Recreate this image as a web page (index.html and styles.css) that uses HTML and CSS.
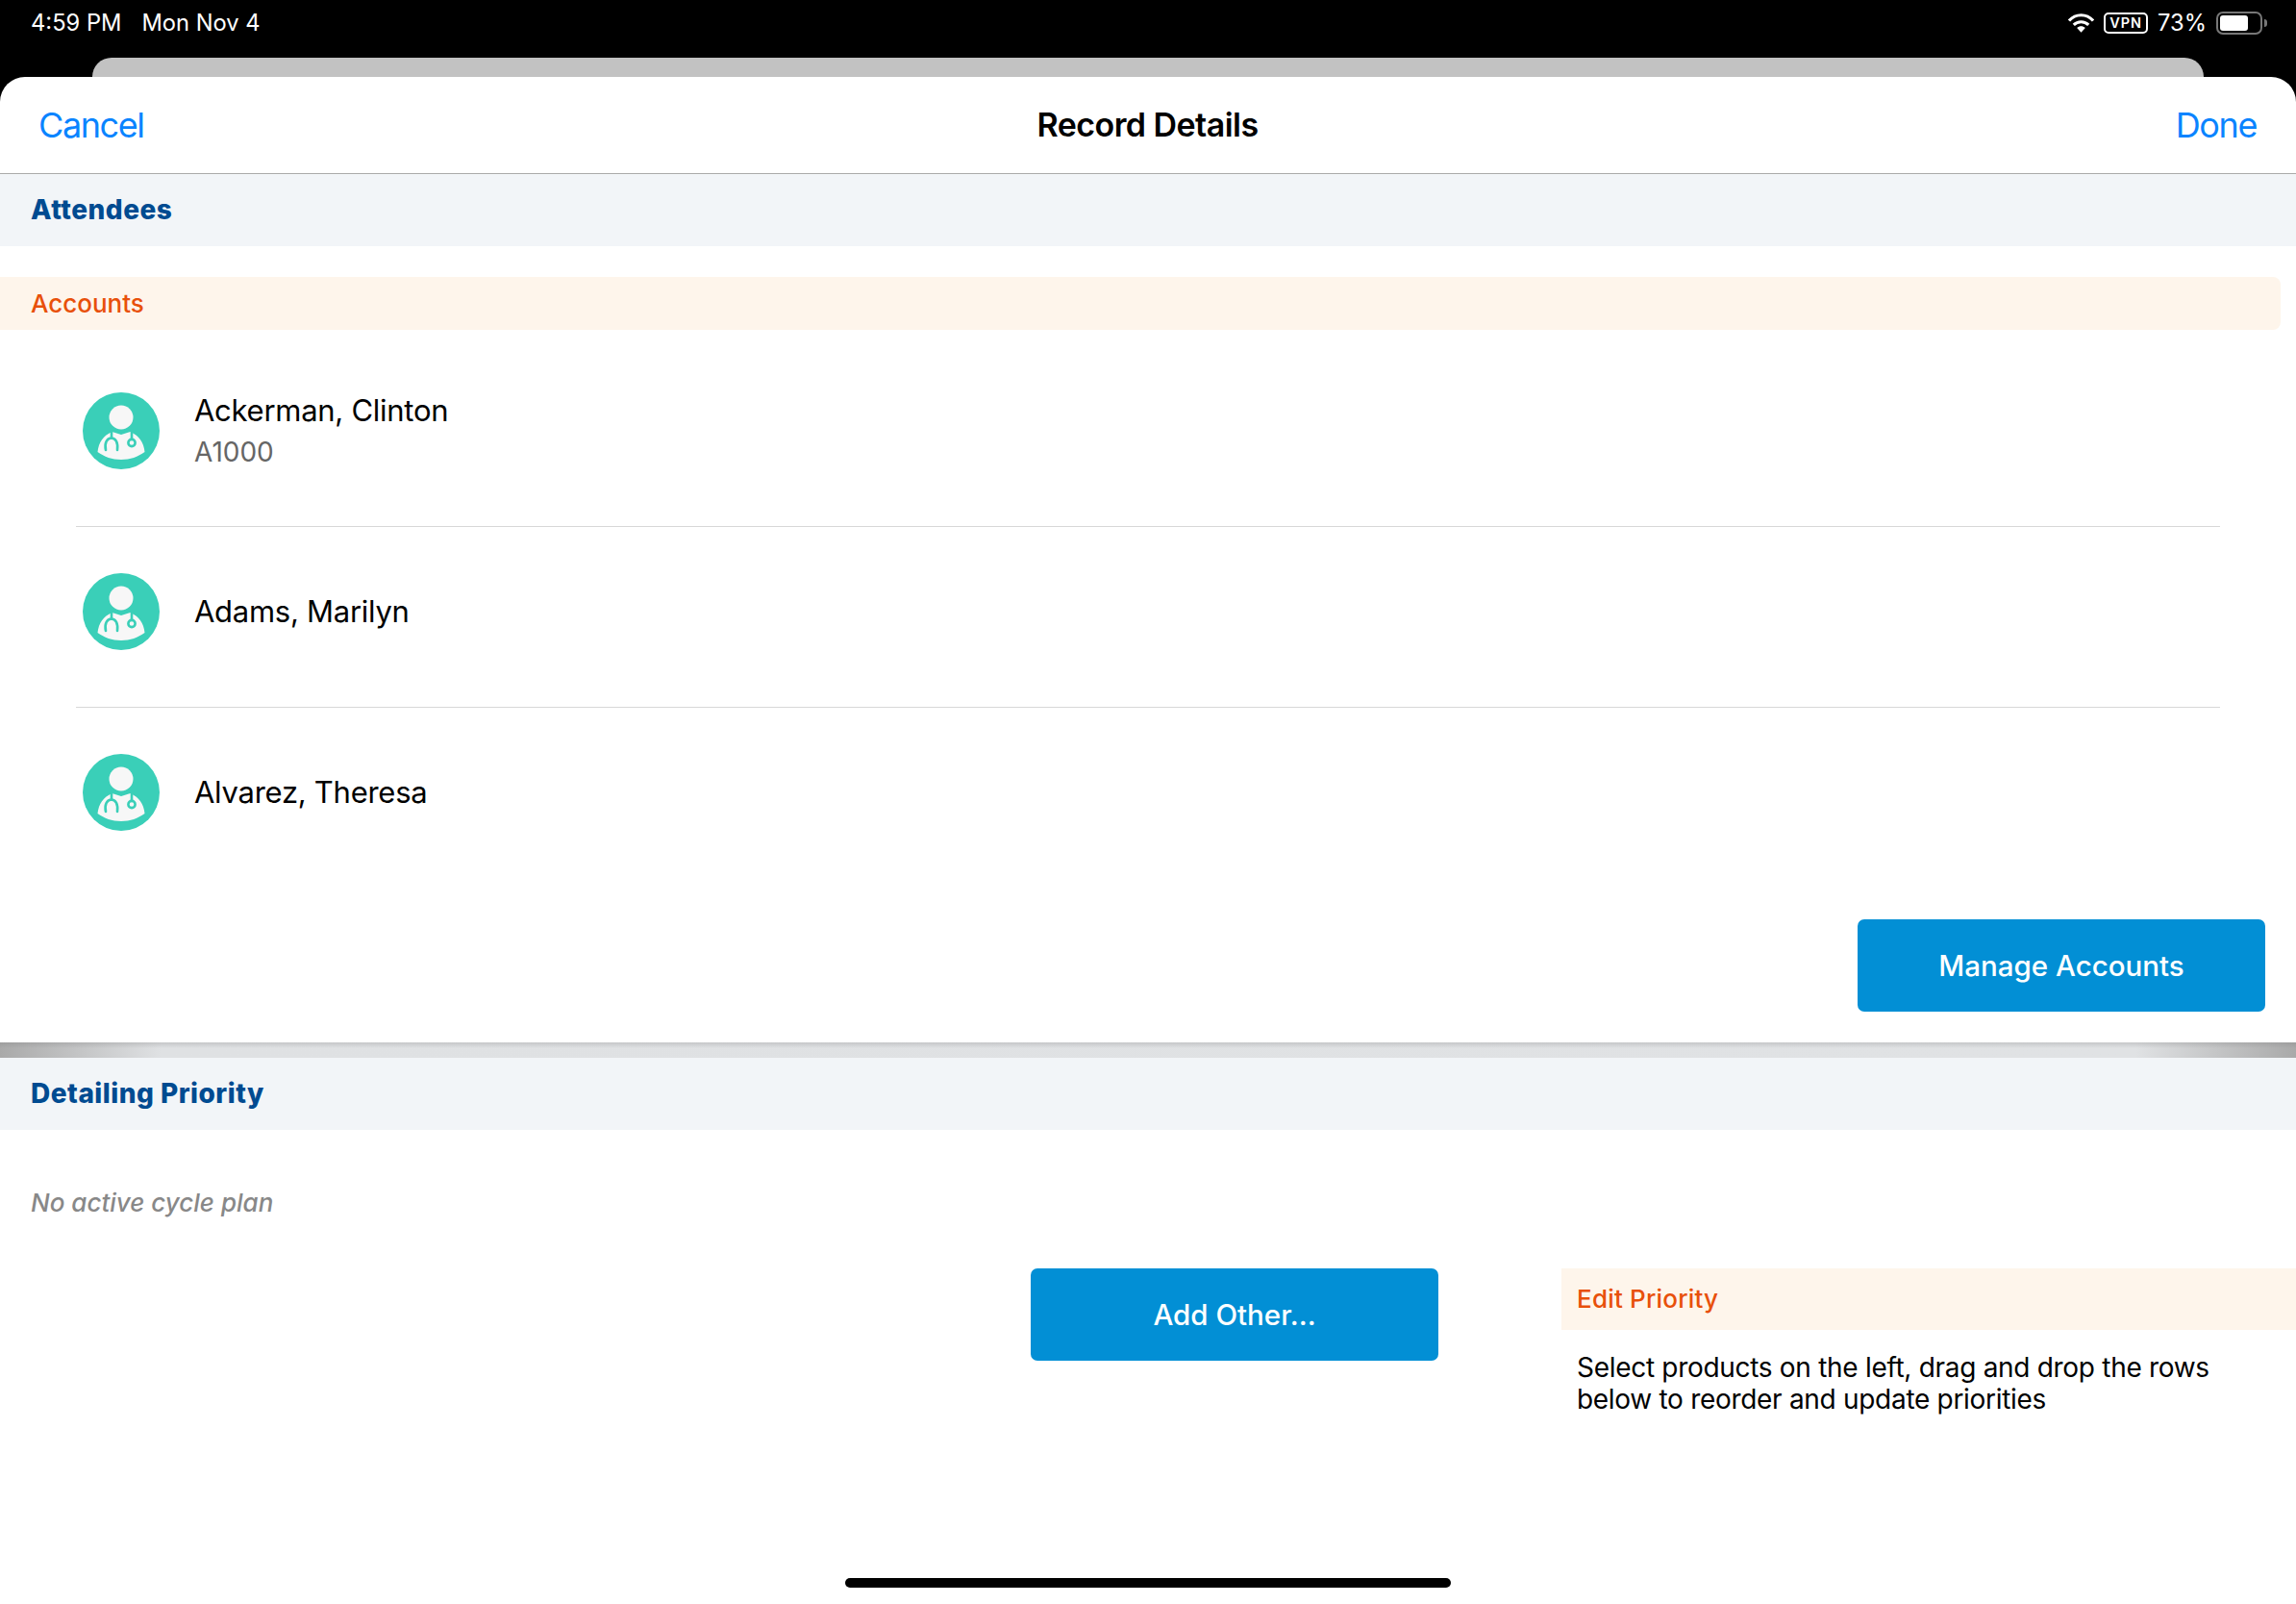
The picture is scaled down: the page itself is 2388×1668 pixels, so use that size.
FILE: index.html
```html
<!DOCTYPE html>
<html lang="en">
<head>
<meta charset="utf-8">
<title>Record Details</title>
<link rel="stylesheet" href="styles.css">
</head>
<body>
<div class="screen">
  <svg width="0" height="0" class="defs">
    <symbol id="doctor" viewBox="0 0 80 80">
      <circle cx="40" cy="40" r="40" fill="#3acfb8"/>
      <circle cx="40" cy="26" r="12.500" fill="#f7f7f7"/>
      <path d="M15.500 62c1-10 6-17 15-21l9.500 3 9.500-3c9 4 14 11 15 21-7 5-15 8-24.500 8s-17.500-3-24.500-8z" fill="#f7f7f7"/>
      <path d="M30 41v7" fill="none" stroke="#3acfb8" stroke-width="2.600"/>
      <path d="M24 60c-1.500-7 1-12 5.500-12.500 5 0 7.500 5 6.500 12.500" fill="none" stroke="#3acfb8" stroke-width="2.600" stroke-linecap="round"/>
      <path d="M51 41v8" fill="none" stroke="#3acfb8" stroke-width="2.600"/>
      <circle cx="51" cy="52.500" r="3.600" fill="none" stroke="#3acfb8" stroke-width="2.600"/>
    </symbol>
  </svg>
  <header class="status">
    <div class="status-left"><span>4:59 PM</span><span>Mon Nov 4</span></div>
    <div class="status-right">
      <svg class="wifi" width="27" height="20" viewBox="0 0 28 20"><path d="M1 7.500C8-.5 20-.5 27 7.500" fill="none" stroke="#fff" stroke-width="3.200"/><path d="M6 12c4.500-4.500 11.500-4.500 16 0" fill="none" stroke="#fff" stroke-width="3.200"/><path d="M9.500 15.200c2.800-2.600 6.200-2.600 9 0L14 20z" fill="#fff"/></svg>
      <span class="vpn">VPN</span>
      <span class="pct">73%</span>
      <span class="battery"><span class="battery-fill"></span></span><span class="battery-cap"></span>
    </div>
  </header>
  <div class="back-sheet"></div>
  <main class="sheet">
    <nav class="nav">
      <a class="nav-link">Cancel</a>
      <h1 class="nav-title">Record Details</h1>
      <a class="nav-link nav-link-end">Done</a>
    </nav>
    <section class="attendees">
      <h2 class="section-head">Attendees</h2>
      <h3 class="sub-head">Accounts</h3>
      <ul class="list">
        <li class="row">
          <svg class="avatar"><use href="#doctor"/></svg>
          <div class="row-text"><div class="name">Ackerman, Clinton</div><div class="code">A1000</div></div>
        </li>
        <li class="row">
          <svg class="avatar"><use href="#doctor"/></svg>
          <div class="row-text"><div class="name">Adams, Marilyn</div></div>
        </li>
        <li class="row">
          <svg class="avatar"><use href="#doctor"/></svg>
          <div class="row-text"><div class="name">Alvarez, Theresa</div></div>
        </li>
      </ul>
      <div class="actions"><button class="btn">Manage Accounts</button></div>
    </section>
    <div class="divider"></div>
    <section class="priority">
      <h2 class="section-head">Detailing Priority</h2>
      <p class="empty">No active cycle plan</p>
      <div class="priority-grid">
        <div class="add-col"><button class="btn">Add Other...</button></div>
        <aside class="edit-col">
          <h3 class="edit-head">Edit Priority</h3>
          <p class="edit-text">Select products on the left, drag and drop the rows below to reorder and update priorities</p>
        </aside>
      </div>
    </section>
    <div class="home-bar"></div>
  </main>
</div>
</body>
</html>
```
FILE: styles.css
```css
* { box-sizing: border-box; }
html, body { margin: 0; padding: 0; }
body { background: #000; font-family: Inter, "Liberation Sans", sans-serif; color: #000; }
h1, h2, h3, p, ul { margin: 0; padding: 0; font-weight: 400; }
ul { list-style: none; }
.defs { position: absolute; }
.screen { width: 2388px; height: 1668px; display: flex; flex-direction: column; overflow: hidden; background: #000; }
.status { height: 60px; flex: none; display: flex; justify-content: space-between; align-items: flex-start; padding: 10px 30px 0 32px; color: #fff; font-size: 23.700px; line-height: 28px; }
.status-left { display: flex; gap: 21px; }
.status-right { display: flex; align-items: center; height: 28px; }
.wifi { margin-right: 10px; }
.vpn { width: 46px; height: 22px; border: 2px solid #fff; border-radius: 5px; font-size: 14.500px; font-weight: 600; letter-spacing: 1px; line-height: 18px; text-align: center; margin-right: 10px; }
.pct { margin-right: 10px; }
.battery { width: 48px; height: 24px; border: 2px solid #777; border-radius: 7px; padding: 2px; display: flex; }
.battery-fill { width: 29px; background: #fff; border-radius: 3px; }
.battery-cap { width: 3px; height: 8px; background: #777; border-radius: 0 3px 3px 0; margin-left: 2px; }
.back-sheet { height: 20px; flex: none; margin: 0 96px; background: #c2c2c2; border-radius: 20px 20px 0 0; }
.sheet { flex: 1; background: #fff; border-radius: 26px 26px 0 0; display: flex; flex-direction: column; position: relative; }
.nav { height: 101px; flex: none; display: grid; grid-template-columns: 1fr auto 1fr; align-items: center; padding: 0 41px 0 40px; border-bottom: 1px solid #aaa; }
.nav-link { color: #0a84ff; font-size: 36px; letter-spacing: -1.400px; }
.nav-link-end { justify-self: end; }
.nav-title { font-size: 34px; font-weight: 600; letter-spacing: -0.550px; margin-top: -2px; }
.section-head { height: 75px; background: #f2f5f8; color: #004b91; font-size: 28px; font-weight: 800; letter-spacing: 0.500px; line-height: 75px; padding-left: 32px; }
.attendees { height: 903px; flex: none; }
.sub-head { margin: 32px 16px 0 0; height: 55px; background: #fef5eb; border-radius: 0 8px 8px 0; color: #e8500a; font-size: 26px; font-weight: 500; line-height: 56px; padding-left: 32px; }
.list { margin: 17px 79px 0 79px; }
.row { height: 188px; display: flex; align-items: center; gap: 36px; padding: 0 0 12px 7px; border-bottom: 1px solid #d8d8d8; }
.row:last-child { border-bottom: 0; }
.avatar { width: 80px; height: 80px; flex: none; }
.name { font-size: 31px; letter-spacing: -0.270px; line-height: 44px; }
.code { font-size: 28px; line-height: 42px; color: #666; }
.actions { display: flex; justify-content: flex-end; padding: 32px 32px 0 0; }
.btn { width: 424px; height: 96px; border: 0; border-radius: 7px; background: #028fd5; color: #fff; font-family: inherit; font-size: 29.500px; font-weight: 500; }
.divider { height: 16px; flex: none; background: linear-gradient(to bottom, rgba(120, 120, 120, 0.250), rgba(120, 120, 120, 0) 6px), linear-gradient(to right, #a9a9a9, #dfe1e3 7%, #e0e2e4 93%, #a9a9a9); }
.priority { flex: 1; }
.empty { margin: 58px 0 0 32px; color: #888; font-size: 26px; font-style: italic; font-weight: 500; line-height: 36px; }
.priority-grid { display: flex; margin-top: 50px; }
.add-col { width: 1624px; padding-left: 1072px; }
.edit-col { flex: 1; }
.edit-head { height: 64px; background: #fef5eb; color: #e8500a; font-size: 26px; font-weight: 500; letter-spacing: 0.200px; line-height: 64px; padding-left: 16px; }
.edit-text { width: 700px; padding: 23px 0 0 16px; font-size: 28px; letter-spacing: -0.300px; line-height: 33px; }
.home-bar { position: absolute; left: 879px; bottom: 17px; width: 630px; height: 10px; border-radius: 5px; background: #000; }
```
